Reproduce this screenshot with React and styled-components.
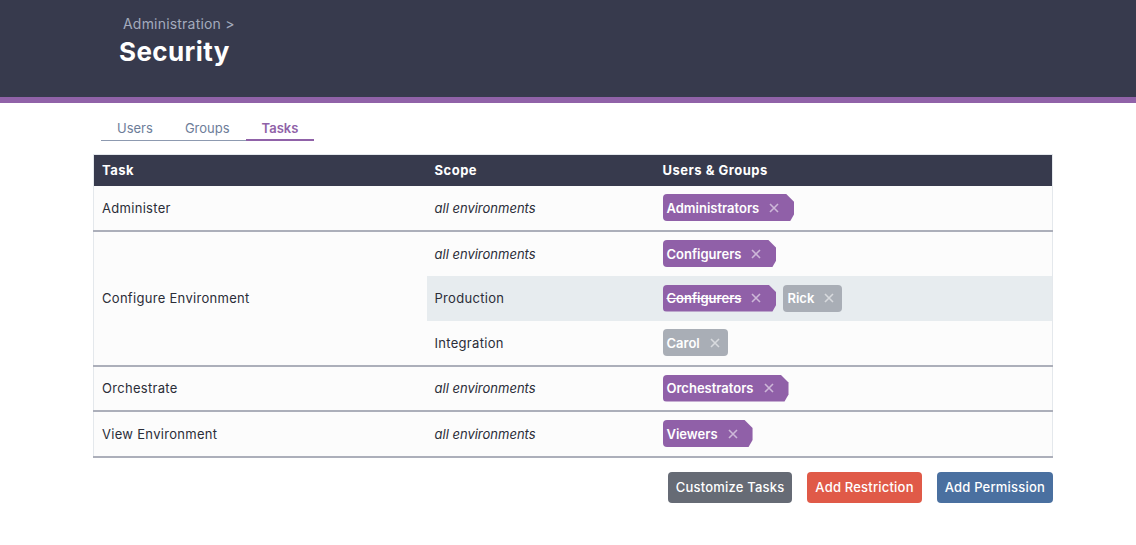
import React from 'react'
import styled, { createGlobalStyle, css } from 'styled-components'

const Global = createGlobalStyle`
    body
    {
        margin: 0;
        background: #ffffff;
        font-family: Inter, 'Open Sans', sans-serif;
        color: #2b2d38;
    }
`

const Header = styled.header`
    background: #373a4d;
    height: 97px;
    border-bottom: 6px solid #9062a8;
    box-sizing: content-box;
    padding: 0;
`

const HeaderInner = styled.div`
    padding: 15px 0 0 119px;
`

const Crumb = styled.div`
    font-size: 14px;
    color: #a3abbd;
    padding-left: 4px;
    line-height: 17px;
    letter-spacing: 0.2px;
`

const Title = styled.h1`
    margin: 3px 0 0;
    font-size: 26px;
    font-weight: 700;
    color: #ffffff;
    line-height: 34px;
    letter-spacing: 0.4px;
`

const Main = styled.main`
    width: 960px;
    margin-left: 93px;
`

const Tabs = styled.nav`
    display: flex;
    padding: 16px 0 0 8px;
    margin-bottom: 13px;
`

const Tab = styled.div`
    padding: 1px 16px 3px;
    font-size: 13px;
    line-height: 17px;
    color: #6d7d99;
    border-bottom: 1px solid #8d9ab0;

    ${p => p.active && css`
        color: #9062a8;
        font-weight: 600;
        border-bottom: 2px solid #9062a8;
        padding-bottom: 2px;
    `}
`

const Table = styled.table`
    width: 100%;
    border-collapse: collapse;
    font-size: 13px;
    letter-spacing: 0.3px;
    border-left: 1px solid #e4e8ec;
    border-right: 1px solid #e4e8ec;
    border-top: 1px solid #e4e8ec;
`

const Th = styled.th`
    background: #373a4d;
    color: #ffffff;
    text-align: left;
    font-weight: 700;
    height: 31px;
    padding: 0 8px;
    box-sizing: border-box;
    letter-spacing: 0.5px;
`

const Group = styled.tbody`
    border-bottom: 2px solid #acafba;
`

const Td = styled.td`
    background: ${p => p.hl ? '#e7ecef' : '#fcfcfc'};
    height: ${p => p.h || 45}px;
    padding: 0 8px;
    box-sizing: border-box;
    vertical-align: middle;

    ${p => p.italic && css`
        font-style: italic;
        letter-spacing: 0;
    `}
`

const TagList = styled.div`
    display: flex;
    gap: 7px;
    align-items: center;
    letter-spacing: 0;
`

const Tag = styled.span`
    display: inline-flex;
    align-items: center;
    gap: 10px;
    height: 27px;
    padding: 0 8px 0 4px;
    border-radius: 4px;
    color: #ffffff;
    font-weight: 600;
    font-size: 13px;
    background: #a9aeb6;

    ${p => p.group && css`
        background: #9060a8;
        padding-right: 15px;
        border-radius: 4px 0 0 4px;
        clip-path: polygon(0 0, calc(100% - 8px) 0, 100% 8px, 100% calc(100% - 7px), calc(100% - 4px) 100%, 0 100%);
    `}

    ${p => p.struck && css`
        & > span { text-decoration: line-through; }
    `}
`

const Cross = styled.svg`
    width: 10px;
    height: 10px;
    stroke: rgba(255, 255, 255, 0.55);
    stroke-width: 1.6;
`

const Actions = styled.div`
    display: flex;
    justify-content: flex-end;
    gap: 15px;
    margin-top: 14px;
`

const Button = styled.button`
    height: 31px;
    padding: 0 8px;
    border: none;
    border-radius: 4px;
    font-family: inherit;
    font-size: 13px;
    font-weight: 500;
    letter-spacing: 0.2px;
    color: #ffffff;
    background: ${p => p.bg};
`

function Chip ({ name, group, struck })
{
    return (
        <Tag group={group} struck={struck}>
            <span>{name}</span>
            <Cross viewBox="0 0 10 10"><path d="M1 1L9 9M9 1L1 9" /></Cross>
        </Tag>
    )
}

function App ()
{
    return (
        <>
            <Global />
            <Header>
                <HeaderInner>
                    <Crumb>Administration &gt;</Crumb>
                    <Title>Security</Title>
                </HeaderInner>
            </Header>
            <Main>
                <Tabs>
                    <Tab>Users</Tab>
                    <Tab>Groups</Tab>
                    <Tab active>Tasks</Tab>
                </Tabs>
                <Table>
                    <colgroup>
                        <col style={{ width: 333 }} />
                        <col style={{ width: 228 }} />
                        <col />
                    </colgroup>
                    <thead>
                        <tr>
                            <Th>Task</Th>
                            <Th>Scope</Th>
                            <Th>Users &amp; Groups</Th>
                        </tr>
                    </thead>
                    <Group>
                        <tr>
                            <Td>Administer</Td>
                            <Td italic>all environments</Td>
                            <Td><TagList><Chip group name="Administrators" /></TagList></Td>
                        </tr>
                    </Group>
                    <Group>
                        <tr>
                            <Td rowSpan={3}>Configure Environment</Td>
                            <Td italic>all environments</Td>
                            <Td><TagList><Chip group name="Configurers" /></TagList></Td>
                        </tr>
                        <tr>
                            <Td hl>Production</Td>
                            <Td hl><TagList><Chip group struck name="Configurers" /><Chip name="Rick" /></TagList></Td>
                        </tr>
                        <tr>
                            <Td>Integration</Td>
                            <Td><TagList><Chip name="Carol" /></TagList></Td>
                        </tr>
                    </Group>
                    <Group>
                        <tr>
                            <Td>Orchestrate</Td>
                            <Td italic>all environments</Td>
                            <Td><TagList><Chip group name="Orchestrators" /></TagList></Td>
                        </tr>
                    </Group>
                    <Group>
                        <tr>
                            <Td h={46}>View Environment</Td>
                            <Td h={46} italic>all environments</Td>
                            <Td h={46}><TagList><Chip group name="Viewers" /></TagList></Td>
                        </tr>
                    </Group>
                </Table>
                <Actions>
                    <Button bg="#666b75">Customize Tasks</Button>
                    <Button bg="#e05a48">Add Restriction</Button>
                    <Button bg="#4a70a0">Add Permission</Button>
                </Actions>
            </Main>
        </>
    )
}

export default App
